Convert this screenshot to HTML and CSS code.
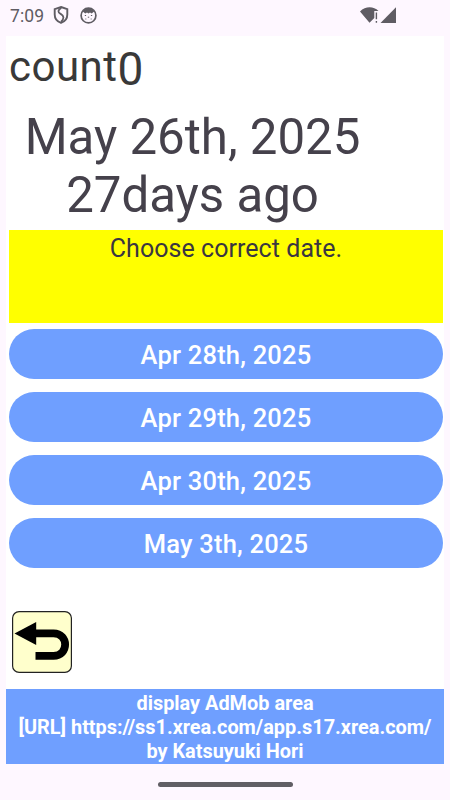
FILE: index.html
```html
<!DOCTYPE html>
<html lang="en">
<head>
  <meta charset="UTF-8">
  <meta name="viewport" content="width=device-width, initial-scale=1.0">
  <title>Choose correct date</title>
  <link rel="stylesheet" href="styles.css">
</head>
<body>

<!-- Status bar -->
<div class="status-bar">
  <span class="clock">7:09</span>
  <svg class="shield-icon" width="16" height="18" viewBox="0 0 16 18">
    <path d="M8 1 L14.3 3.2 V8.5 C14.3 12.4 11.8 15.6 8 16.9 C4.2 15.6 1.7 12.4 1.7 8.5 V3.2 Z" fill="none" stroke="#5f5c63" stroke-width="1.9"/>
    <path d="M8.3 2 C4.6 4 4.6 6.2 7.6 7.9 C11.2 10 11.4 12.4 8 15.9" fill="none" stroke="#5f5c63" stroke-width="1.8"/>
  </svg>
  <svg class="face-icon" width="17" height="17" viewBox="0 0 17 17">
    <circle cx="8.5" cy="8.5" r="7.4" fill="none" stroke="#5f5c63" stroke-width="1.7"/>
    <path d="M2.8 4.5 C5 .6 12 .6 14.2 4.5 L12.9 5.4 L11.7 6.4 L10 5.6 L8.5 6.4 L7 5.6 L5.3 6.4 L4 5.4 Z" fill="#5f5c63"/>
    <path d="M4.8 8.5 h1.3 M10.9 8.5 h1.3 M7.8 10.2 h1.4 M5.4 12 h.9 M10.7 12 h.9" stroke="#5f5c63" stroke-width="1"/>
  </svg>
  <svg class="signal-icons" width="38" height="18" viewBox="0 0 38 18">
    <path d="M0 4.4 C5.5 -1 13.5 -1 18.5 4 H14.3 V11 L9.5 15.8 Z" fill="#5f5c63"/>
    <path d="M16.4 5.5 V12.2 M16.4 14 V15.8" stroke="#5f5c63" stroke-width="1.4"/>
    <path d="M36 .2 V16 H20.5 Z" fill="#5f5c63"/>
  </svg>
</div>

<div class="app">
  <div class="count">
    <span class="count-label">count</span><span class="count-value">0</span>
  </div>

  <div class="question">
    <div class="question-date">May 26th, 2025</div>
    <div class="question-days">27days ago</div>
  </div>

  <div class="message">Choose correct date.</div>

  <div class="choices">
    <button class="choice">Apr 28th, 2025</button>
    <button class="choice">Apr 29th, 2025</button>
    <button class="choice">Apr 30th, 2025</button>
    <button class="choice">May 3th, 2025</button>
  </div>

  <button class="back-button" aria-label="Back">
    <svg width="60" height="62" viewBox="0 0 60 62">
      <rect x=".6" y=".6" width="58.8" height="60.8" rx="6.5" fill="#ffffcc" stroke="#222" stroke-width="1.2"/>
      <path d="M2.5 22.5 L24.2 11 V34 Z" fill="#000"/>
      <path d="M23 22.4 H41.5 C57 22.4 57 44.8 41.5 44.8 H23.5" fill="none" stroke="#000" stroke-width="7.8"/>
    </svg>
  </button>

  <div class="ad-area">
    display AdMob area<br>
    [URL] https://ss1.xrea.com/app.s17.xrea.com/<br>
    by Katsuyuki Hori
  </div>
</div>

<div class="nav-handle"></div>

</body>
</html>
```

FILE: styles.css
```css
body {
  font-family: Roboto, sans-serif;
  margin: 0;
  height: 800px;
  background-color: #fef7ff;
  color: #45414b;
  overflow: hidden;
}

button {
  font-family: inherit;
  border: none;
  padding: 0;
}

.status-bar {
  display: flex;
  height: 36px;
  box-sizing: border-box;
  padding: 6px 52px 0 10px;
}

.clock {
  width: 43px;
  font-size: 17.5px;
  line-height: 20px;
  letter-spacing: 0.1px;
  color: #5f5c63;
}

.face-icon {
  margin: 1px 0 0 11px;
}

.signal-icons {
  margin: 1px 0 0 auto;
}

.app {
  display: flex;
  flex-direction: column;
  height: 728px;
  margin: 0 6px;
  background-color: #ffffff;
}

.count {
  display: flex;
  height: 72px;
  padding-left: 3px;
  color: #393939;
}

.count-label {
  font-size: 42px;
  line-height: 62px;
  letter-spacing: 0.5px;
}

.count-value {
  font-size: 46px;
  line-height: 66px;
}

.question {
  width: 373px;
  height: 122px;
  font-size: 49.2px;
  line-height: 58px;
  text-align: center;
  white-space: nowrap;
}

.message {
  height: 93px;
  margin: 0 1px 0 3px;
  background-color: #ffff00;
  color: #3a3640;
  font-size: 25px;
  line-height: 37px;
  letter-spacing: 0.05px;
  text-align: center;
}

.choices {
  display: flex;
  flex-direction: column;
  gap: 13px;
  margin: 6px 1px 0 3px;
}

.choice {
  height: 50px;
  padding-top: 3px;
  border-radius: 25px;
  background-color: #6f9fff;
  color: #ffffff;
  font-size: 25.5px;
  font-weight: 500;
  line-height: 47px;
  letter-spacing: 0.2px;
}

.back-button {
  width: 60px;
  height: 62px;
  margin: 43px 0 0 6px;
  background: none;
}

.back-button svg {
  display: block;
}

.ad-area {
  height: 75px;
  box-sizing: border-box;
  margin-top: auto;
  padding-top: 3px;
  background-color: #6f9fff;
  color: #ffffff;
  font-size: 19.9px;
  font-weight: bold;
  line-height: 24px;
  text-align: center;
  white-space: nowrap;
}

.nav-handle {
  width: 135px;
  height: 5px;
  margin: 18px auto 0;
  border-radius: 3px;
  background-color: #615e65;
}
```
